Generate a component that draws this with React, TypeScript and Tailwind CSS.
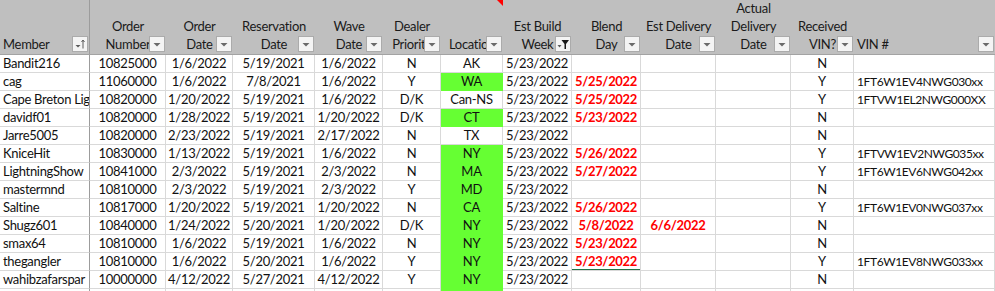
import React from "react";

type Row = {
  member: string;
  order: string;
  orderDate: string;
  resDate: string;
  wave: string;
  dealer: string;
  loc: string;
  green: boolean;
  build: string;
  blend: string;
  estDel: string;
  rec: string;
  vin: string;
  selected?: boolean;
};

const rows: Row[] = [
  { member: "Bandit216", order: "10825000", orderDate: "1/6/2022", resDate: "5/19/2021", wave: "1/6/2022", dealer: "N", loc: "AK", green: false, build: "5/23/2022", blend: "", estDel: "", rec: "N", vin: "" },
  { member: "cag", order: "11060000", orderDate: "1/6/2022", resDate: "7/8/2021", wave: "1/6/2022", dealer: "Y", loc: "WA", green: true, build: "5/23/2022", blend: "5/25/2022", estDel: "", rec: "Y", vin: "1FT6W1EV4NWG030xx" },
  { member: "Cape Breton Lig", order: "10820000", orderDate: "1/20/2022", resDate: "5/19/2021", wave: "1/6/2022", dealer: "D/K", loc: "Can-NS", green: false, build: "5/23/2022", blend: "5/25/2022", estDel: "", rec: "Y", vin: "1FTVW1EL2NWG000XX" },
  { member: "davidf01", order: "10820000", orderDate: "1/28/2022", resDate: "5/19/2021", wave: "1/20/2022", dealer: "D/K", loc: "CT", green: true, build: "5/23/2022", blend: "5/23/2022", estDel: "", rec: "N", vin: "" },
  { member: "Jarre5005", order: "10820000", orderDate: "2/23/2022", resDate: "5/19/2021", wave: "2/17/2022", dealer: "N", loc: "TX", green: false, build: "5/23/2022", blend: "", estDel: "", rec: "N", vin: "" },
  { member: "KniceHit", order: "10830000", orderDate: "1/13/2022", resDate: "5/19/2021", wave: "1/6/2022", dealer: "N", loc: "NY", green: true, build: "5/23/2022", blend: "5/26/2022", estDel: "", rec: "Y", vin: "1FTVW1EV2NWG035xx" },
  { member: "LightningShow", order: "10841000", orderDate: "2/3/2022", resDate: "5/19/2021", wave: "2/3/2022", dealer: "N", loc: "MA", green: true, build: "5/23/2022", blend: "5/27/2022", estDel: "", rec: "Y", vin: "1FT6W1EV6NWG042xx" },
  { member: "mastermnd", order: "10810000", orderDate: "2/3/2022", resDate: "5/19/2021", wave: "2/3/2022", dealer: "Y", loc: "MD", green: true, build: "5/23/2022", blend: "", estDel: "", rec: "N", vin: "" },
  { member: "Saltine", order: "10817000", orderDate: "1/20/2022", resDate: "5/19/2021", wave: "1/20/2022", dealer: "N", loc: "CA", green: true, build: "5/23/2022", blend: "5/26/2022", estDel: "", rec: "Y", vin: "1FT6W1EV0NWG037xx" },
  { member: "Shugz601", order: "10840000", orderDate: "1/24/2022", resDate: "5/20/2021", wave: "1/20/2022", dealer: "D/K", loc: "NY", green: true, build: "5/23/2022", blend: "5/8/2022", estDel: "6/6/2022", rec: "N", vin: "" },
  { member: "smax64", order: "10810000", orderDate: "1/6/2022", resDate: "5/19/2021", wave: "1/6/2022", dealer: "N", loc: "NY", green: true, build: "5/23/2022", blend: "5/23/2022", estDel: "", rec: "N", vin: "" },
  { member: "thegangler", order: "10810000", orderDate: "1/6/2022", resDate: "5/20/2021", wave: "1/6/2022", dealer: "Y", loc: "NY", green: true, build: "5/23/2022", blend: "5/23/2022", estDel: "", rec: "Y", vin: "1FT6W1EV8NWG033xx", selected: true },
  { member: "wahibzafarspar", order: "10000000", orderDate: "4/12/2022", resDate: "5/27/2021", wave: "4/12/2022", dealer: "Y", loc: "NY", green: true, build: "5/23/2022", blend: "", estDel: "", rec: "N", vin: "" },
];

const GRID = "grid grid-cols-[90px_76px_67px_82px_68px_58px_62px_69px_69px_75px_75px_63px_141px]";

function DropArrow() {
  return (
    <svg width="14" height="14" viewBox="0 0 14 14">
      <path d="M3.5 6 L10.5 6 L7 9.5 Z" fill="#6a6a6a" />
    </svg>
  );
}

function SortIcon() {
  return (
    <svg width="14" height="14" viewBox="0 0 14 14">
      <path d="M2.5 8 L7.5 8 L5 10.5 Z" fill="#5a5a5a" />
      <path d="M10 11.5 L10 3.5" stroke="#5a5a5a" strokeWidth="1" />
      <path d="M8.5 5 L10 3 L11.5 5" stroke="#5a5a5a" strokeWidth="1" fill="none" />
    </svg>
  );
}

function FunnelIcon() {
  return (
    <svg width="14" height="14" viewBox="0 0 14 14">
      <path d="M1.5 8 L5.5 8 L3.5 10.5 Z" fill="#5a5a5a" />
      <path d="M5.5 3 L13 3 L10 7 L10 12 L8.5 12 L8.5 7 Z" fill="#1a1a1a" />
    </svg>
  );
}

function FilterBtn({ kind = "drop" }: { kind?: "drop" | "sort" | "funnel" }) {
  return (
    <div className="absolute right-[1px] bottom-[2px] w-[16px] h-[16px] bg-[#f4f4f4] border border-[#ababab] flex items-center justify-center">
      {kind === "drop" && <DropArrow />}
      {kind === "sort" && <SortIcon />}
      {kind === "funnel" && <FunnelIcon />}
    </div>
  );
}

function HeadCell({
  lines,
  kind,
  align = "center",
  extra = "",
  children,
}: {
  lines: string[];
  kind?: "drop" | "sort" | "funnel";
  align?: "center" | "left";
  extra?: string;
  children?: React.ReactNode;
}) {
  return (
    <div className={`relative h-full flex flex-col justify-end pb-[1px] overflow-hidden whitespace-nowrap ${extra}`}>
      {lines.map((l, i) => (
        <div
          key={i}
          className={`leading-[18px] h-[18px] ${align === "center" ? "text-center" : "text-left pl-[3px]"}`}
        >
          {l}
        </div>
      ))}
      {children}
      {kind && <FilterBtn kind={kind} />}
    </div>
  );
}

function Cell({
  children,
  className = "",
}: {
  children?: React.ReactNode;
  className?: string;
}) {
  return (
    <div
      className={`relative h-[18px] border-r border-b border-[#d9d9d9] whitespace-nowrap overflow-hidden leading-[17px] ${className}`}
    >
      {children}
    </div>
  );
}

export default function App() {
  return (
    <div
      className="w-[995px] h-[291px] overflow-hidden bg-white text-[#111] text-[13px] tracking-[-0.3px]"
      style={{ fontFamily: "Lato, 'Liberation Sans', sans-serif" }}
    >
      {/* Header */}
      <div className={`${GRID} h-[55px] bg-[#bfbfbf] border-b border-[#a3a3a3] text-[#1a1a1a]`}>
        <HeadCell lines={["Member"]} kind="sort" align="left" extra="border-r border-[#9c9c9c]" />
        <HeadCell lines={["Order", "Number"]} kind="drop" />
        <HeadCell lines={["Order", "Date"]} kind="drop" />
        <HeadCell lines={["Reservation", "Date"]} kind="drop" />
        <HeadCell lines={["Wave", "Date"]} kind="drop" />
        <HeadCell lines={["Dealer", "Priority"]} kind="drop" />
        <HeadCell lines={["Location"]} kind="drop">
          <div className="absolute top-0 right-0 w-0 h-0 border-t-[6px] border-t-[#ff0000] border-l-[6px] border-l-transparent" />
        </HeadCell>
        <HeadCell lines={["Est Build", "Week"]} kind="funnel" />
        <HeadCell lines={["Blend", "Day"]} kind="drop" />
        <HeadCell lines={["Est Delivery", "Date"]} kind="drop" />
        <HeadCell lines={["Actual", "Delivery", "Date"]} kind="drop" />
        <HeadCell lines={["Received", "VIN?"]} kind="drop" />
        <HeadCell lines={["VIN #"]} kind="drop" align="left" />
      </div>

      {/* Rows */}
      {rows.map((r, i) => (
        <div key={i} className={GRID}>
          <Cell className="pl-[3px] border-r-[#9c9c9c]">{r.member}</Cell>
          <Cell className="text-center">{r.order}</Cell>
          <Cell className="text-center">{r.orderDate}</Cell>
          <Cell className="text-center">{r.resDate}</Cell>
          <Cell className="text-center">{r.wave}</Cell>
          <Cell className="text-center">{r.dealer}</Cell>
          <Cell
            className={`text-center ${r.green ? "bg-[#66ff33] border-r-[#66ff33] border-b-[#66ff33]" : ""}`}
          >
            {r.loc}
          </Cell>
          <Cell className="text-center">{r.build}</Cell>
          <Cell className="text-center font-bold text-[#ff0000]">
            {r.blend}
            {r.selected && (
              <div className="absolute left-[-1px] right-[-1px] bottom-[-1px] h-[2px] bg-[#217346]" />
            )}
          </Cell>
          <Cell className="text-center font-bold text-[#ff0000]">{r.estDel}</Cell>
          <Cell className="text-center"></Cell>
          <Cell className="text-center">{r.rec}</Cell>
          <Cell className="pl-[3px] text-[12px] tracking-[-0.4px]">{r.vin}</Cell>
        </div>
      ))}
      <div className={GRID}>
        <Cell className="border-r-[#9c9c9c]" />
        <Cell />
        <Cell />
        <Cell />
        <Cell />
        <Cell />
        <Cell className="bg-[#66ff33] border-r-[#66ff33] border-b-[#66ff33]" />
        <Cell />
        <Cell />
        <Cell />
        <Cell />
        <Cell />
        <Cell />
      </div>
    </div>
  );
}
